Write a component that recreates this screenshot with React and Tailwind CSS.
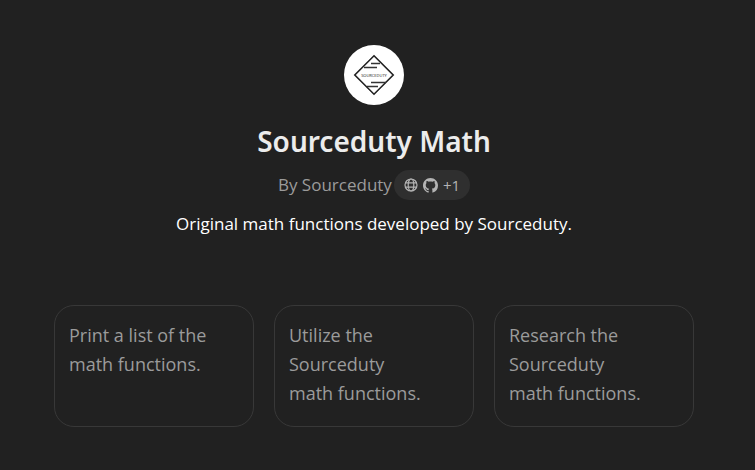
import React from 'react';

const prompts = [
  ['Print a list of the', 'math functions.'],
  ['Utilize the', 'Sourceduty', 'math functions.'],
  ['Research the', 'Sourceduty', 'math functions.'],
];

function Logo() {
  return (
    <svg viewBox="0 0 60 60" role="img" aria-label="Sourceduty logo" className="size-[60px] rounded-full bg-white">
      <path d="M30 10.8 49.2 30 30 49.2 10.8 30Z" fill="none" stroke="#222" strokeWidth="1.6" />
      <path d="M27 18.5h9M20 22.5h13M27 37.5h15M23 41.5h11" stroke="#333" strokeWidth="1.4" />
      <text x="30" y="31.5" textAnchor="middle" fontSize="4" fill="#222" fontFamily="Open Sans, sans-serif">SOURCEDUTY</text>
    </svg>
  );
}

function Globe() {
  return (
    <svg viewBox="0 0 14 14" aria-hidden="true" className="size-[14px]" fill="none" stroke="currentColor" strokeWidth="1.2">
      <circle cx="7" cy="7" r="6" />
      <ellipse cx="7" cy="7" rx="2.8" ry="6" />
      <path d="M1.6 4.8h10.8M1.6 9.2h10.8" />
    </svg>
  );
}

function GitHub() {
  return (
    <svg viewBox="0 0 16 16" aria-hidden="true" className="size-[15px]" fill="currentColor">
      <path d="M8 0C3.58 0 0 3.58 0 8c0 3.54 2.29 6.53 5.47 7.59.4.07.55-.17.55-.38 0-.19-.01-.82-.01-1.49-2.01.37-2.53-.49-2.69-.94-.09-.23-.48-.94-.82-1.13-.28-.15-.68-.52-.01-.53.63-.01 1.08.58 1.23.82.72 1.21 1.87.87 2.33.66.07-.52.28-.87.51-1.07-1.78-.2-3.64-.89-3.64-3.95 0-.87.31-1.59.82-2.15-.08-.2-.36-1.02.08-2.12 0 0 .67-.21 2.2.82.64-.18 1.32-.27 2-.27s1.36.09 2 .27c1.53-1.04 2.2-.82 2.2-.82.44 1.1.16 1.92.08 2.12.51.56.82 1.27.82 2.15 0 3.07-1.87 3.75-3.65 3.95.29.25.54.73.54 1.48 0 1.07-.01 1.93-.01 2.2 0 .21.15.46.55.38A8.01 8.01 0 0 0 16 8c0-4.42-3.58-8-8-8Z" />
    </svg>
  );
}

export default function App() {
  return (
    <main className="min-h-screen bg-[#212121] pt-[45px] pr-[7px] font-['Open_Sans','Noto_Sans',sans-serif]">
      <header className="flex flex-col items-center text-center">
        <Logo />
        <h1 className="mt-4 font-['Noto_Sans','Open_Sans',sans-serif] text-[28px] leading-[40px] font-semibold text-[#ececec]">Sourceduty Math</h1>
        <div className="mt-[9px] flex items-center gap-0.5 text-[#9b9b9b]">
          <span className="text-[17px] leading-[30px]">By Sourceduty</span>
          <button type="button" aria-label="Sourceduty links, +1 more" className="flex h-[30px] items-center gap-[5px] rounded-full bg-[#2f2f2f] px-[10px] text-[15px] font-medium text-[#b4b4b4]">
            <Globe />
            <GitHub />
            <span>+1</span>
          </button>
        </div>
        <p className="mt-[9px] text-[17px] leading-[29px] text-white">Original math functions developed by Sourceduty.</p>
      </header>
      <section aria-label="Suggested prompts" className="mx-auto mt-[67px] grid max-w-[640px] grid-cols-3 gap-5">
        {prompts.map((lines) => (
          <button key={lines[0]} type="button" className="flex min-h-[122px] flex-col items-start rounded-[20px] border border-[#383838] px-[14px] py-[15px] text-left text-[18px] leading-[29px] text-[#9b9b9b]">
            {lines.map((line) => (
              <span key={line}>{line}</span>
            ))}
          </button>
        ))}
      </section>
    </main>
  );
}
